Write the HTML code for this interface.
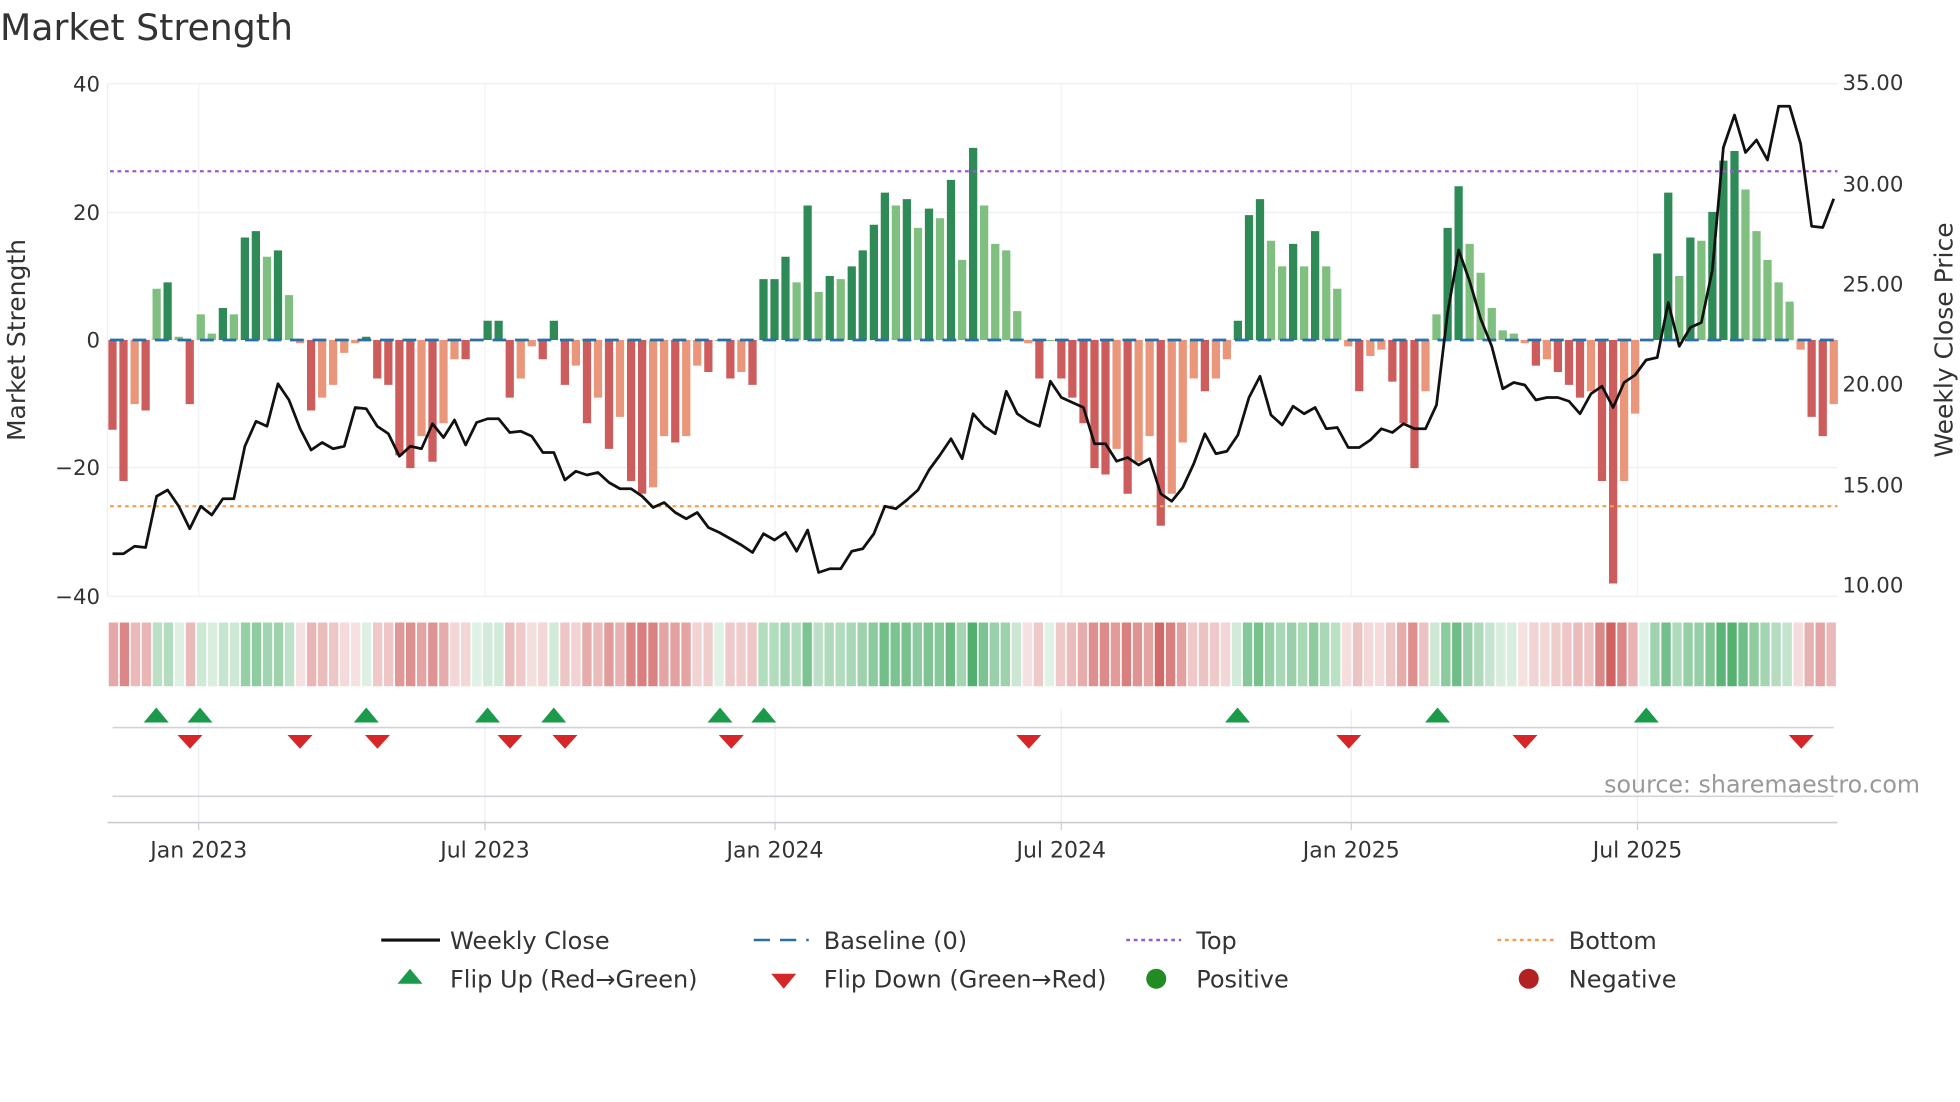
<!DOCTYPE html>
<html><head><meta charset="utf-8"><style>
html,body{margin:0;padding:0;background:#fff;width:1960px;height:1102px;overflow:hidden}
svg{display:block}
text{font-family:"DejaVu Sans","Liberation Sans",sans-serif;fill:#333}
</style></head><body>
<svg id="s" width="1960" height="1102" viewBox="0 0 1568 881.6" xmlns="http://www.w3.org/2000/svg"></svg>
<script>
var B=[-14,-22,-10,-11,8,9,0.5,-10,4,1,5,4,16,17,13,14,7,-0.5,-11,-9,-7,-2,-0.5,0.5,-6,-7,-18,-20,-15,-19,-13,-3,-3,0,3,3,-9,-6,-1,-3,3,-7,-4,-13,-9,-17,-12,-22,-24,-23,-15,-16,-15,-4,-5,0,-6,-5,-7,9.5,9.5,13,9,21,7.5,10,9.5,11.5,14,18,23,21,22,17.5,20.5,19,25,12.5,30,21,15,14,4.5,-0.5,-6,0,-6,-9,-13,-20,-21,-17,-24,-19,-15,-29,-24,-16,-6,-8,-6,-3,3,19.5,22,15.5,11.5,15,11.5,17,11.5,8,-1,-8,-2.5,-1.5,-6.5,-13,-20,-8,4,17.5,24,15,10.5,5,1.5,1,-0.5,-4,-3,-5,-7,-9,-8,-22,-38,-22,-11.5,0,13.5,23,10,16,15.5,20,28,29.5,23.5,17,12.5,9,6,-1.5,-12,-15,-10];
var P=[443,443,437,438,397,392,405,423,405,412,399,399,357,337,341,307,320,343,360,354,359,357,326,327,341,347,365,357,359,339,350,336,356,338,335,335,346,345,349,362,362,384,377,380,378,386,391,391,397,406,402,410,415,410,422,426,431,436,442,427,432,426,441,424,458,455,455,441,439,427,405,407,400,392,376,364,351,367,331,341,347,313,331,337,341,305,318,322,326,355,355,369,366,372,367,395,401,390,371,347,363,361,348,318,301,332,340,325,331,326,343,342,358,358,352,343,346,339,343,343,324,250,200,225,255,277,311,306,308,320,318,318,321,331,315,309,326,306,300,288,286,242,277,262,258,216,118,92,122,112,128,85,85,115,181,182,159];
var n=B.length,x0=90,dx=(1467-90)/(n-1),y0=272,k=(477-67)/80;
var h='';
h+='<text x="0" y="32" font-size="29">Market Strength</text>';
[67,170,272,374,477].forEach(function(y){h+='<line x1="86" x2="1470" y1="'+y+'" y2="'+y+'" stroke="#eceff3" stroke-width="1"/>';});
[159,388,620,849,1081,1310].forEach(function(x){h+='<line x1="'+x+'" x2="'+x+'" y1="67" y2="477" stroke="#f1f3f6" stroke-width="1"/>';});
h+='<line x1="86" x2="86" y1="67" y2="477" stroke="#eceff3"/>';
for(var i=0;i<n;i++){var v=B[i],pv=i?B[i-1]:0,x=x0+dx*i,dark=Math.abs(v)>=Math.abs(pv);
var c=v>=0?(dark?'#2e8b57':'#7fbf7f'):(dark?'#cd5c5c':'#e9967a');
var yy=y0-v*k,ht=Math.abs(v*k);h+='<rect x="'+(x-3.3).toFixed(1)+'" y="'+Math.min(yy,y0).toFixed(1)+'" width="6.6" height="'+Math.max(ht,0.8).toFixed(1)+'" fill="'+c+'"/>';}
h+='<line x1="88" x2="1470" y1="272" y2="272" stroke="#2a6fa8" stroke-width="2.2" stroke-dasharray="11,7"/>';
h+='<line x1="88" x2="1470" y1="137" y2="137" stroke="#9b59d0" stroke-width="1.8" stroke-dasharray="3,3"/>';
h+='<line x1="88" x2="1470" y1="405" y2="405" stroke="#f0a050" stroke-width="1.8" stroke-dasharray="3,3"/>';
var pts=P.map(function(y,i){return (x0+dx*i).toFixed(1)+','+y;}).join(' ');
h+='<polyline points="'+pts+'" fill="none" stroke="#111" stroke-width="2.2" stroke-linejoin="round"/>';
[['40',67],['20',170],['0',272],['\u221220',374],['\u221240',477]].forEach(function(a){h+='<text x="80" y="'+(a[1]+6)+'" font-size="17" text-anchor="end">'+a[0]+'</text>';});
[['35.00',66],['30.00',147],['25.00',227],['20.00',307],['15.00',388],['10.00',468]].forEach(function(a){h+='<text x="1474" y="'+(a[1]+6)+'" font-size="17">'+a[0]+'</text>';});
h+='<text transform="translate(20,272) rotate(-90)" font-size="20" text-anchor="middle">Market Strength</text>';
h+='<text transform="translate(1562,272) rotate(-90)" font-size="20" text-anchor="middle">Weekly Close Price</text>';
for(var i=0;i<n;i++){var v=B[i],a=Math.min(1,0.18+Math.abs(v)/32*0.85),x=87+(1470-87)/n*i,w=(1470-87)/n-1.3;
var c=v>=0?'rgba(46,160,80,'+(a*0.85).toFixed(2)+')':'rgba(200,70,70,'+(a*0.85).toFixed(2)+')';
h+='<rect x="'+x.toFixed(1)+'" y="498" width="'+w.toFixed(1)+'" height="51" fill="'+c+'"/>';}
[159,388,620,849,1081,1310].forEach(function(x){h+='<line x1="'+x+'" x2="'+x+'" y1="567" y2="658" stroke="#eceff3"/>';});
h+='<line x1="90" x2="1467" y1="582" y2="582" stroke="#d0d4d8" stroke-width="1.3"/>';
h+='<line x1="90" x2="1467" y1="637" y2="637" stroke="#d0d4d8" stroke-width="1.3"/>';
h+='<line x1="86" x2="1470" y1="658" y2="658" stroke="#c8ccd0" stroke-width="1.3"/>';
[125,160,293,390,443,576,611,990,1150,1317].forEach(function(x){h+='<polygon points="'+(x-10)+',578 '+(x+10)+',578 '+x+',566" fill="#1a9a4a"/>';});
[152,240,302,408,452,585,823,1079,1220,1441].forEach(function(x){h+='<polygon points="'+(x-10)+',588 '+(x+10)+',588 '+x+',599" fill="#d62728"/>';});
h+='<text x="1536" y="634" font-size="19" text-anchor="end" style="fill:#999">source: sharemaestro.com</text>';
[['Jan 2023',159],['Jul 2023',388],['Jan 2024',620],['Jul 2024',849],['Jan 2025',1081],['Jul 2025',1310]].forEach(function(a){h+='<line x1="'+a[1]+'" x2="'+a[1]+'" y1="658" y2="664" stroke="#c8ccd0"/><text x="'+a[1]+'" y="686" font-size="17.6" text-anchor="middle">'+a[0]+'</text>';});
var fs='19.2';
h+='<line x1="305" x2="352" y1="752" y2="752" stroke="#111" stroke-width="2.5"/><text x="360" y="759" font-size="'+fs+'">Weekly Close</text>';
h+='<line x1="603" x2="647" y1="752" y2="752" stroke="#2a6fa8" stroke-width="2" stroke-dasharray="13,8"/><text x="659" y="759" font-size="'+fs+'">Baseline (0)</text>';
h+='<line x1="901" x2="945" y1="752" y2="752" stroke="#9b59d0" stroke-width="2" stroke-dasharray="3,3"/><text x="957" y="759" font-size="'+fs+'">Top</text>';
h+='<line x1="1198" x2="1243" y1="752" y2="752" stroke="#f0a050" stroke-width="2" stroke-dasharray="3,3"/><text x="1255" y="759" font-size="'+fs+'">Bottom</text>';
h+='<polygon points="318,787 338,787 328,775" fill="#1a9a4a"/><text x="360" y="790" font-size="'+fs+'">Flip Up (Red\u2192Green)</text>';
h+='<polygon points="617,779 637,779 627,791" fill="#d62728"/><text x="659" y="790" font-size="'+fs+'">Flip Down (Green\u2192Red)</text>';
h+='<circle cx="925" cy="783" r="8" fill="#228b22"/><text x="957" y="790" font-size="'+fs+'">Positive</text>';
h+='<circle cx="1223" cy="783" r="8" fill="#b22222"/><text x="1255" y="790" font-size="'+fs+'">Negative</text>';
document.getElementById('s').innerHTML=h;
</script>
</body></html>
